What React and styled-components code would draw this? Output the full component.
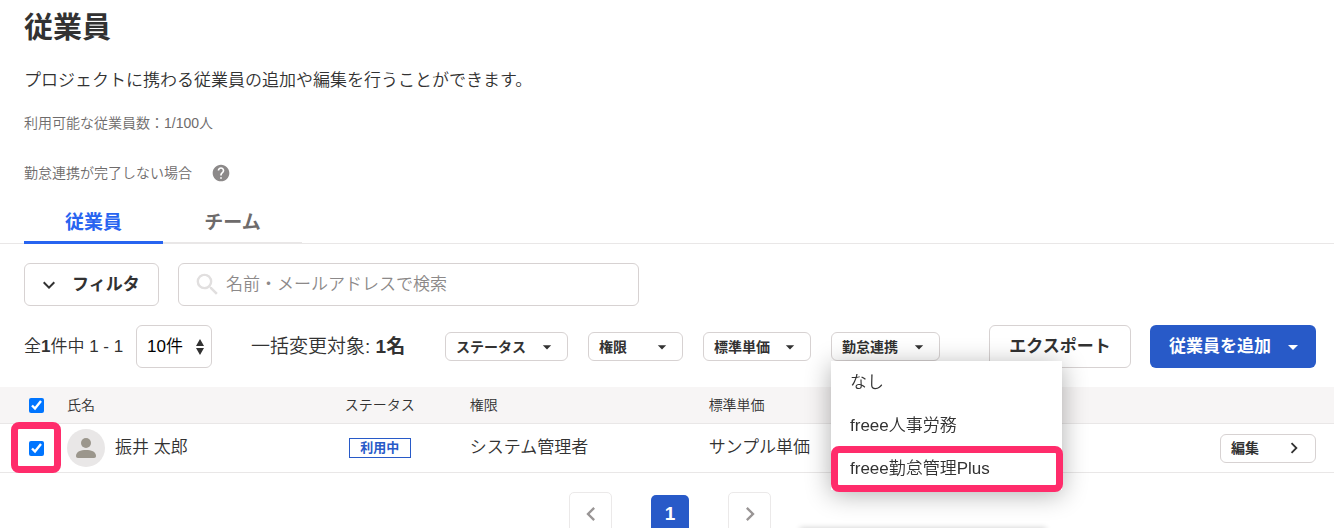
import React, { useState } from "react";
import styled, { createGlobalStyle } from "styled-components";
import {
  MdHelp,
  MdSearch,
  MdExpandMore,
  MdArrowDropDown,
  MdChevronLeft,
  MdChevronRight,
} from "react-icons/md";

const bulkMenus = [
  { label: "ステータス", width: 123 },
  { label: "権限", width: 95 },
  { label: "標準単価", width: 108 },
];

const linkOptions = ["なし", "freee人事労務", "freee勤怠管理Plus"];

const App = () => {
  const [checked, setChecked] = useState(true);
  const [keyword, setKeyword] = useState("");

  return (
    <Page>
      <GlobalStyle />

      <Intro>
        <h1>従業員</h1>
        <p>プロジェクトに携わる従業員の追加や編集を行うことができます。</p>
        <Note>利用可能な従業員数：1/100人</Note>
        <HelpLine>
          勤怠連携が完了しない場合
          <HelpButton type="button" aria-label="ヘルプ">
            <MdHelp size={20} />
          </HelpButton>
        </HelpLine>
      </Intro>

      <Tabs>
        <Tab type="button" $active>
          従業員
        </Tab>
        <Tab type="button">チーム</Tab>
      </Tabs>

      <SearchBar>
        <FilterButton type="button">
          <MdExpandMore size={24} />
          フィルタ
        </FilterButton>
        <SearchBox>
          <MdSearch size={29} />
          <input
            type="text"
            aria-label="検索"
            placeholder="名前・メールアドレスで検索"
            value={keyword}
            onChange={(e) => setKeyword(e.target.value)}
          />
        </SearchBox>
      </SearchBar>

      <Toolbar>
        <Count>
          全<b>1</b>件中 1 - 1
        </Count>
        <PageSize>
          <select aria-label="表示件数" defaultValue="10">
            <option value="10">10件</option>
          </select>
          <svg width="8" height="16" viewBox="0 0 8 16">
            <path d="M4 0l4 7H0zM4 16l4-7H0z" fill="#323232" />
          </svg>
        </PageSize>
        <Target>
          一括変更対象: <b>1名</b>
        </Target>
        <BulkActions>
          {bulkMenus.map((menu) => (
            <SmallButton type="button" key={menu.label} $width={menu.width}>
              {menu.label}
              <MdArrowDropDown size={20} />
            </SmallButton>
          ))}
          <MenuAnchor>
            <SmallButton type="button" $width={109}>
              勤怠連携
              <MdArrowDropDown size={20} />
            </SmallButton>
            <Menu>
              {linkOptions.map((option, i) => (
                <li key={option}>
                  <MenuItem type="button">{option}</MenuItem>
                  {i === 2 && <MenuFrame />}
                </li>
              ))}
            </Menu>
          </MenuAnchor>
        </BulkActions>
        <MainActions>
          <ExportButton type="button">エクスポート</ExportButton>
          <AddButton type="button">
            従業員を追加
            <MdArrowDropDown size={24} />
          </AddButton>
        </MainActions>
      </Toolbar>

      <Table>
        <colgroup>
          <CheckCol />
          <Col $width="18.5%" />
          <Col $width="11.7%" />
          <Col $width="17.9%" />
          <Col />
          <Col $width="12%" />
        </colgroup>
        <thead>
          <tr>
            <CheckHead>
              <Checkbox
                type="checkbox"
                aria-label="すべて選択"
                checked={checked}
                onChange={() => setChecked(!checked)}
              />
            </CheckHead>
            <Head>氏名</Head>
            <Head $center>ステータス</Head>
            <Head>権限</Head>
            <Head>標準単価</Head>
            <Head />
          </tr>
        </thead>
        <tbody>
          <tr>
            <CheckCell>
              <Checkbox
                type="checkbox"
                aria-label="振井 太郎を選択"
                checked={checked}
                onChange={() => setChecked(!checked)}
              />
              <CheckFrame />
            </CheckCell>
            <Cell>
              <Person>
                <Avatar>
                  <svg width="20" height="20" viewBox="0 0 20 20">
                    <circle cx="10" cy="5" r="5" />
                    <path d="M0 18c0-4.500 5-6 10-6s10 1.500 10 6c0 1.300-.7 2-2 2H2c-1.300 0-2-.7-2-2z" />
                  </svg>
                </Avatar>
                振井 太郎
              </Person>
            </Cell>
            <Cell $center>
              <Badge>利用中</Badge>
            </Cell>
            <Cell>システム管理者</Cell>
            <Cell>サンプル単価</Cell>
            <ActionCell>
              <SmallButton type="button" $width={96}>
                編集
                <MdChevronRight size={22} />
              </SmallButton>
            </ActionCell>
          </tr>
        </tbody>
      </Table>

      <Pagination aria-label="ページ">
        <PageButton type="button" aria-label="前へ">
          <MdChevronLeft size={28} />
        </PageButton>
        <CurrentPage type="button">1</CurrentPage>
        <PageButton type="button" aria-label="次へ">
          <MdChevronRight size={28} />
        </PageButton>
      </Pagination>

      <BottomPanel />
    </Page>
  );
};

const GlobalStyle = createGlobalStyle`
  * {
    box-sizing: border-box;
  }

  body {
    margin: 0;
    background: #fff;
    color: #323232;
    font-family: "Liberation Sans", "Noto Sans CJK JP", sans-serif;
    font-size: 17px;
    font-weight: 350;
    line-height: 24px;
  }

  button, input, select {
    font: inherit;
    color: inherit;
  }

  button {
    cursor: pointer;
  }

  b {
    font-weight: bold;
  }

  svg {
    flex: none;
  }
`;

const Page = styled.main`
  position: relative;
  overflow: hidden;
`;

const Intro = styled.header`
  padding: 8px 24px 0;

  h1 {
    margin: 0 0 21px;
    font-size: 29px;
    line-height: 40px;
  }

  p {
    margin: 0;
    line-height: 24px;
  }
`;

const Note = styled.div`
  margin-top: 18px;
  font-size: 14px;
  color: #6e6b6b;
`;

const HelpLine = styled.div`
  display: flex;
  align-items: center;
  gap: 19px;
  margin-top: 26px;
  font-size: 14px;
  color: #6e6b6b;
`;

const HelpButton = styled.button`
  display: flex;
  padding: 0;
  border: 0;
  background: none;
  color: #8c8989;
`;

const Tabs = styled.nav`
  display: flex;
  height: 44px;
  margin-top: 15px;
  padding-left: 24px;
  border-bottom: 1px solid #e9e7e7;
`;

const Tab = styled.button`
  width: 139px;
  height: 44px;
  padding: 4px 0 0;
  border: 0;
  border-bottom: ${({ $active }) =>
    $active ? "3px solid #2864f0" : "2px solid #e9e7e7"};
  background: none;
  color: ${({ $active }) => ($active ? "#2864f0" : "#6e6b6b")};
  font-size: 19px;
  font-weight: bold;
`;

const SearchBar = styled.div`
  display: flex;
  gap: 19px;
  padding: 19px 24px 0;
`;

const FilterButton = styled.button`
  display: flex;
  align-items: center;
  gap: 11px;
  width: 135px;
  height: 43px;
  padding: 0 12px;
  border: 1px solid #d7d2d2;
  border-radius: 6px;
  background: #fff;
  font-weight: bold;
`;

const SearchBox = styled.div`
  display: flex;
  align-items: center;
  gap: 4px;
  flex: 0 1 461px;
  height: 43px;
  padding: 0 14px;
  border: 1px solid #d7d2d2;
  border-radius: 6px;

  svg {
    color: #e1dfdf;
  }

  input {
    flex: 1;
    min-width: 0;
    padding: 0;
    border: 0;
    outline: 0;
    background: none;
  }

  input::placeholder {
    color: #8c8989;
    opacity: 1;
  }
`;

const Toolbar = styled.div`
  display: flex;
  align-items: center;
  padding: 19px 18px 19px 24px;
  white-space: nowrap;
`;

const Count = styled.div`
  width: 100px;
`;

const PageSize = styled.div`
  position: relative;
  margin-left: 12px;

  select {
    width: 76px;
    height: 43px;
    padding: 0 10px;
    border: 1px solid #d7d2d2;
    border-radius: 6px;
    background: #fff;
    color: #000;
    appearance: none;
  }

  svg {
    position: absolute;
    top: 14px;
    right: 8px;
    pointer-events: none;
  }
`;

const Target = styled.div`
  width: 156px;
  margin-left: 39px;
  font-size: 19px;
`;

const BulkActions = styled.div`
  display: flex;
  gap: 20px;
  margin-left: 38px;
`;

const SmallButton = styled.button`
  display: flex;
  align-items: center;
  justify-content: space-between;
  width: ${({ $width }) => $width}px;
  height: 29px;
  padding: 0 10px;
  border: 1px solid #d7d2d2;
  border-radius: 6px;
  background: #fff;
  font-size: 14px;
  font-weight: bold;
`;

const MenuAnchor = styled.div`
  position: relative;
`;

const Menu = styled.ul`
  position: absolute;
  z-index: 2;
  top: 100%;
  left: 0;
  width: 231px;
  margin: 0;
  padding: 0;
  background: #fff;
  box-shadow: 0 4px 24px rgba(0, 0, 0, 0.32);
  list-style: none;

  li {
    position: relative;
  }
`;

const MenuItem = styled.button`
  display: block;
  width: 100%;
  height: 43px;
  padding: 0 19px;
  border: 0;
  background: none;
  text-align: left;
`;

const Frame = styled.span`
  position: absolute;
  border: 7px solid #ff2c6b;
  border-radius: 8px;
  pointer-events: none;
`;

const MenuFrame = styled(Frame)`
  inset: -1px -1px -2px 0;
`;

const CheckFrame = styled(Frame)`
  top: -2px;
  left: 11px;
  width: 50px;
  height: 51px;
`;

const MainActions = styled.div`
  display: flex;
  gap: 19px;
  margin-left: auto;
`;

const LargeButton = styled.button`
  display: flex;
  align-items: center;
  justify-content: center;
  height: 43px;
  border-radius: 6px;
  font-weight: bold;
`;

const ExportButton = styled(LargeButton)`
  width: 142px;
  padding: 0;
  border: 1px solid #d7d2d2;
  background: #fff;
`;

const AddButton = styled(LargeButton)`
  justify-content: space-between;
  width: 166px;
  padding: 0 11px 0 19px;
  border: 0;
  background: #285ac8;
  color: #fff;
`;

const Table = styled.table`
  width: 100%;
  border-collapse: separate;
  border-spacing: 0;
  table-layout: fixed;
`;

const CheckCol = styled.col`
  width: 55px;
`;

const Col = styled.col`
  width: ${({ $width }) => $width || "auto"};
`;

const Head = styled.th`
  height: 37px;
  padding: 0 12px;
  border-bottom: 1px solid #e9e7e7;
  background: #f7f5f5;
  font-size: 14px;
  font-weight: inherit;
  text-align: ${({ $center }) => ($center ? "center" : "left")};
`;

const CheckHead = styled(Head)`
  padding: 0 0 0 29px;
`;

const Cell = styled.td`
  height: 49px;
  padding: 0 12px;
  border-bottom: 1px solid #e9e7e7;
  text-align: ${({ $center }) => ($center ? "center" : "left")};
`;

const CheckCell = styled(Cell)`
  position: relative;
  padding: 0 0 0 29px;
`;

const ActionCell = styled(Cell)`
  padding: 0 18px;

  ${SmallButton} {
    margin-left: auto;
  }
`;

const Checkbox = styled.input`
  display: block;
  width: 15px;
  height: 15px;
  margin: 0;
`;

const Person = styled.div`
  display: flex;
  align-items: center;
  gap: 10px;
`;

const Avatar = styled.span`
  display: flex;
  align-items: center;
  justify-content: center;
  width: 38px;
  height: 38px;
  border-radius: 50%;
  background: #e9e7e7;

  svg {
    fill: #9b968c;
  }
`;

const Badge = styled.span`
  display: block;
  width: 62px;
  margin: 0 auto;
  border: 1px solid #285ac8;
  color: #285ac8;
  font-size: 13px;
  font-weight: bold;
  line-height: 18px;
`;

const Pagination = styled.nav`
  display: flex;
  align-items: center;
  justify-content: center;
  gap: 39px;
  padding: 19px 0 19px 6px;
`;

const PageButton = styled.button`
  display: flex;
  align-items: center;
  justify-content: center;
  width: 43px;
  height: 43px;
  padding: 0;
  border: 1px solid #ebe9e9;
  border-radius: 5px;
  background: #fff;
  color: #999595;
`;

const CurrentPage = styled.button`
  width: 38px;
  height: 38px;
  padding: 0;
  border: 0;
  border-radius: 5px;
  background: #285ac8;
  color: #fff;
  font-size: 19px;
  font-weight: bold;
`;

/* panel docked under the window, only its shadow reaches into view */
const BottomPanel = styled.aside`
  position: fixed;
  top: 100%;
  left: 60%;
  width: 246px;
  height: 80px;
  background: #fff;
  box-shadow: 0 0 6px rgba(0, 0, 0, 0.2);
`;

export default App;
